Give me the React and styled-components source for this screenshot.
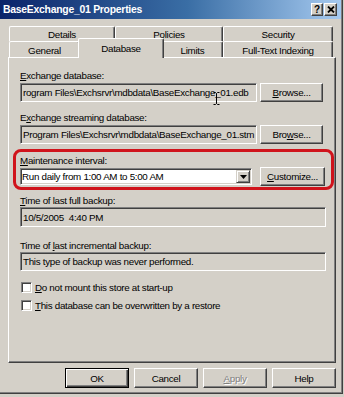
import React from 'react';
import styled, { createGlobalStyle } from 'styled-components';

const Global = createGlobalStyle`
  html, body { margin: 0; padding: 0; background: #d4d0c8; }
  body { font-family: "Liberation Sans", Arial, sans-serif; font-size: 9.8px; letter-spacing: -0.3px; color: #000; }
  * { box-sizing: border-box; }
`;

const Window = styled.div`
  width: 343px;
  height: 394px;
  display: flex;
  flex-direction: column;
  background: #d4d0c8;
  border-right: 1px solid #404040;
  border-bottom: 1px solid #404040;
  box-shadow: inset -1px -1px 0 #808080;
`;

const TitleBar = styled.div`
  height: 19px;
  margin-right: 1px;
  display: flex;
  align-items: center;
  padding: 0 4px 0 3px;
  background: linear-gradient(to right, #0a246a 0%, #3a6ea5 55%, #a6caf0 100%);
  color: #fff;
  font-weight: bold;
  font-size: 10.4px;
  letter-spacing: -0.25px;
`;

const TitleText = styled.div`
  flex: 1;
  white-space: nowrap;
`;

const TitleButtons = styled.div`
  display: flex;
  gap: 1px;
`;

const TitleButton = styled.div`
  width: ${p => p.w}px;
  height: 13px;
  background: #d4d0c8;
  border-top: 1px solid #fff;
  border-left: 1px solid #fff;
  border-right: 1px solid #404040;
  border-bottom: 1px solid #404040;
  box-shadow: inset -1px -1px 0 #808080;
  display: flex;
  align-items: center;
  justify-content: center;
  color: #000;
  font-size: 10px;
  font-weight: bold;
  line-height: 1;
  letter-spacing: 0;
`;

const TabArea = styled.div`
  margin-top: 7px;
  padding-left: 9px;
  display: flex;
  flex-direction: column;
`;

const TabRow = styled.div`
  display: flex;
  height: ${p => p.h}px;
`;

const Tab = styled.div`
  width: ${p => p.w}px;
  height: 100%;
  display: flex;
  align-items: center;
  justify-content: center;
  padding-top: ${p => p.pt || 0}px;
  border-top: 1px solid #fff;
  border-left: 1px solid #fff;
  border-right: 1px solid #404040;
  box-shadow: inset -1px 0 0 #808080;
  border-radius: 2px 2px 0 0;
  background: #d4d0c8;
  white-space: nowrap;
`;

const ActiveTab = styled(Tab)`
  width: ${p => p.w + 4}px;
  height: 20px;
  margin: -3px -2px 0;
  padding-top: 0;
  padding-bottom: 1px;
  position: relative;
  z-index: 1;
`;

const Panel = styled.div`
  margin-left: 8px;
  width: 328px;
  height: 306px;
  border-top: 1px solid #fff;
  border-left: 1px solid #fff;
  border-right: 1px solid #404040;
  border-bottom: 1px solid #404040;
  box-shadow: inset -1px -1px 0 #808080;
  padding: 12px 9px 0 11px;
  display: flex;
  flex-direction: column;
`;

const Label = styled.div`
  height: 11px;
  line-height: 11px;
  margin-top: ${p => p.mt || 0}px;
  white-space: nowrap;
`;

const U = styled.span`
  text-decoration: underline;
`;

const Row = styled.div`
  display: flex;
  align-items: center;
  gap: ${p => p.gap || 3}px;
  margin-top: ${p => (p.mt === undefined ? 2 : p.mt)}px;
  height: ${p => p.h || 19}px;
  position: relative;
`;

const TextBox = styled.div`
  width: ${p => p.w}px;
  height: ${p => p.h || 19}px;
  border-top: 1px solid #808080;
  border-left: 1px solid #808080;
  border-right: 1px solid #fff;
  border-bottom: 1px solid #fff;
  box-shadow: inset 1px 1px 0 #404040, inset -1px -1px 0 #d4d0c8;
  background: ${p => (p.white ? '#fff' : '#d4d0c8')};
  padding-left: ${p => (p.pl === undefined ? 2 : p.pl)}px;
  display: flex;
  align-items: center;
  overflow: hidden;
  white-space: nowrap;
`;

const ComboText = styled.div`
  flex: 1;
  overflow: hidden;
`;

const ComboArrow = styled.div`
  width: 14px;
  height: 13px;
  margin-right: 1px;
  background: #d4d0c8;
  border-top: 1px solid #d4d0c8;
  border-left: 1px solid #d4d0c8;
  border-right: 1px solid #404040;
  border-bottom: 1px solid #404040;
  box-shadow: inset 1px 1px 0 #fff, inset -1px -1px 0 #808080;
  display: flex;
  align-items: center;
  justify-content: center;
`;

const Button = styled.div`
  width: ${p => p.w}px;
  height: ${p => p.h || 19}px;
  background: #d4d0c8;
  border-top: 1px solid #fff;
  border-left: 1px solid #fff;
  border-right: 1px solid #404040;
  border-bottom: 1px solid #404040;
  box-shadow: inset -1px -1px 0 #808080;
  display: flex;
  align-items: center;
  justify-content: center;
  white-space: nowrap;
  color: ${p => (p.disabled ? '#808080' : '#000')};
  text-shadow: ${p => (p.disabled ? '1px 1px 0 #fff' : 'none')};
`;

const DefaultButton = styled(Button)`
  border: 1px solid #000;
  box-shadow: inset 1px 1px 0 #fff, inset -1px -1px 0 #404040, inset -2px -2px 0 #808080;
`;

const Highlight = styled.div`
  margin: 5px -8px 0 -7px;
  border: 3px solid #d0141c;
  border-radius: 8px;
  padding: 3px 5px 1px 4px;
  display: flex;
  flex-direction: column;
`;

const CheckRow = styled.div`
  display: flex;
  align-items: center;
  gap: 3px;
  height: 11px;
  margin-top: ${p => p.mt}px;
  margin-left: 1px;
  white-space: nowrap;
`;

const CheckBox = styled.div`
  width: 11px;
  height: 11px;
  flex: none;
  background: #fff;
  border-top: 1px solid #808080;
  border-left: 1px solid #808080;
  border-right: 1px solid #fff;
  border-bottom: 1px solid #fff;
  box-shadow: inset 1px 1px 0 #404040, inset -1px -1px 0 #d4d0c8;
`;

const Footer = styled.div`
  display: flex;
  gap: 5px;
  margin-top: 5px;
  padding-left: 65px;
`;

const Cursor = styled.svg`
  position: absolute;
  left: 193px;
  top: 9px;
`;

export default function App() {
  return (
    <>
      <Global />
      <Window>
        <TitleBar>
          <TitleText>BaseExchange_01 Properties</TitleText>
          <TitleButtons>
            <TitleButton w={12}>?</TitleButton>
            <TitleButton w={13}>
              <svg width="8" height="7" viewBox="0 0 8 7">
                <path d="M1 0.5 L7 6.5 M7 0.5 L1 6.5" stroke="#000" strokeWidth="1.8" />
              </svg>
            </TitleButton>
          </TitleButtons>
        </TitleBar>

        <TabArea>
          <TabRow h={15}>
            <Tab w={106}>Details</Tab>
            <Tab w={108}>Policies</Tab>
            <Tab w={110}>Security</Tab>
          </TabRow>
          <TabRow h={16}>
            <Tab w={71} pt={2}>General</Tab>
            <ActiveTab w={82}>Database</ActiveTab>
            <Tab w={61} pt={2}>Limits</Tab>
            <Tab w={110} pt={2}>Full-Text Indexing</Tab>
          </TabRow>
        </TabArea>

        <Panel>
          <Label><U>E</U>xchange database:</Label>
          <Row>
            <TextBox w={237}>rogram Files\Exchsrvr\mdbdata\BaseExchange_01.edb</TextBox>
            <Button w={63}><U>B</U>rowse...</Button>
            <Cursor width="7" height="13" viewBox="0 0 7 13">
              <path d="M0.5 0.5 H2.5 L3.5 1.5 L4.5 0.5 H6.5 M3.5 1.5 V11.5 M0.5 12.5 H2.5 L3.5 11.5 L4.5 12.5 H6.5" stroke="#000" strokeWidth="1" fill="none" />
            </Cursor>
          </Row>

          <Label mt={10}>E<U>x</U>change streaming database:</Label>
          <Row>
            <TextBox w={237}>Program Files\Exchsrvr\mdbdata\BaseExchange_01.stm</TextBox>
            <Button w={63}>Bro<U>w</U>se...</Button>
          </Row>

          <Highlight>
            <Label><U>M</U>aintenance interval:</Label>
            <Row mt={1} gap={8}>
              <TextBox w={232} h={17} white pl={1}>
                <ComboText>Run daily from 1:00 AM to 5:00 AM</ComboText>
                <ComboArrow>
                  <svg width="7" height="4" viewBox="0 0 7 4">
                    <path d="M0 0 H7 L3.5 4 Z" fill="#000" />
                  </svg>
                </ComboArrow>
              </TextBox>
              <Button w={65}><U>C</U>ustomize...</Button>
            </Row>
          </Highlight>

          <Label mt={5}><U>T</U>ime of last full backup:</Label>
          <Row mt={1} h={20}>
            <TextBox w={306} h={20}>10/5/2005&nbsp;&nbsp;4:40 PM</TextBox>
          </Row>

          <Label mt={13}>Time of <U>l</U>ast incremental backup:</Label>
          <Row mt={1}>
            <TextBox w={306}>This type of backup was never performed.</TextBox>
          </Row>

          <CheckRow mt={11}>
            <CheckBox />
            <span><U>D</U>o not mount this store at start-up</span>
          </CheckRow>
          <CheckRow mt={7}>
            <CheckBox />
            <span><U>T</U>his database can be overwritten by a restore</span>
          </CheckRow>
        </Panel>

        <Footer>
          <DefaultButton w={64} h={20}>OK</DefaultButton>
          <Button w={64} h={20}>Cancel</Button>
          <Button w={64} h={20} disabled><U>A</U>pply</Button>
          <Button w={64} h={20}>Help</Button>
        </Footer>
      </Window>
    </>
  );
}
